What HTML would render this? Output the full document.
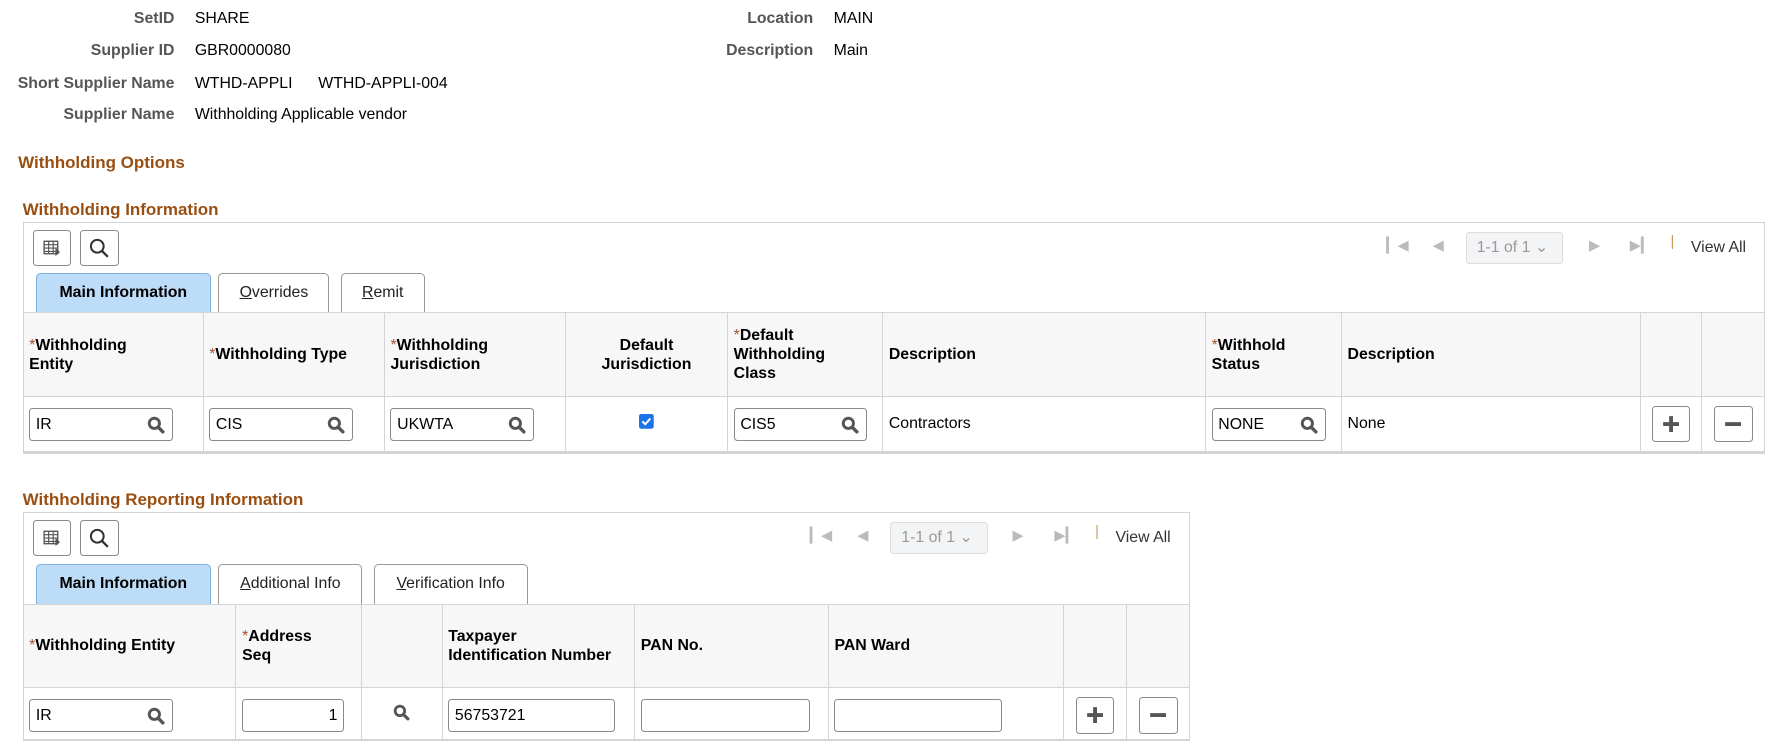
<!DOCTYPE html>
<html><head><meta charset="utf-8"><style>
body{margin:0;background:#fff;font-family:"Liberation Sans",Arial,sans-serif;font-size:14px;color:#000;}
#w{zoom:1.13265;position:relative;width:1568px;height:663px;overflow:hidden}
.a{position:absolute}
.lbl{position:absolute;font-weight:bold;color:#555;text-align:right;width:300px;}
.val{position:absolute}
.h{position:absolute;font-weight:bold;color:#9a4f12;font-size:15px}
.box{position:absolute;border:1px solid #d2d5d8;border-bottom:2px solid #d2d5d8;box-sizing:border-box;background:#fff;overflow:hidden}
.tb{position:absolute;width:34px;height:32px;border:1px solid #8a8a8a;border-radius:3px;box-sizing:border-box;background:#fff}
.tab{position:absolute;height:36px;border:1px solid #999;border-bottom:none;border-radius:4px 4px 0 0;box-sizing:border-box;text-align:center;line-height:34px;font-size:14px;color:#222;background:#fff}
.tab.on{background:#bddcf7;border-color:#7fb0e0;font-weight:bold;color:#000}
table{position:absolute;border-collapse:collapse;table-layout:fixed}
td{border:1px solid #d2d5d8;padding:0 5px;vertical-align:middle}
tr.hd td{background:#f7f7f7;font-weight:bold;height:73px;line-height:17px}
tr.rw td{height:48px}
i{font-style:normal;font-weight:normal;color:#a0522d}
.inp{position:relative;height:29px;border:1px solid #8a8a8a;border-radius:3px;box-sizing:border-box;line-height:29px;padding-left:5px;background:#fff}
.inp svg{position:absolute;right:6px;top:6px}
.pb{width:34px;height:32px;border:1px solid #8a8a8a;border-radius:3px;box-sizing:border-box;margin:0 auto;position:relative}
.pg{position:absolute;color:#bbb;font-size:13px}
.sel{position:absolute;width:86px;height:28px;border:1px solid #ddd;border-radius:3px;background:#f3f4f6;box-sizing:border-box;color:#999;line-height:26px;padding-left:9px}
.va{position:absolute;color:#333}
u{text-decoration:underline}
</style></head><body><div id="w">
<div class="lbl" style="left:-146px;top:9px">SetID</div><div class="val" style="left:172px;top:9px">SHARE</div>
<div class="lbl" style="left:-146px;top:37px">Supplier ID</div><div class="val" style="left:172px;top:37px">GBR0000080</div>
<div class="lbl" style="left:-146px;top:66px">Short Supplier Name</div><div class="val" style="left:172px;top:66px">WTHD-APPLI</div><div class="val" style="left:281px;top:66px">WTHD-APPLI-004</div>
<div class="lbl" style="left:-146px;top:94px">Supplier Name</div><div class="val" style="left:172px;top:94px">Withholding Applicable vendor</div>
<div class="lbl" style="left:418px;top:9px">Location</div><div class="val" style="left:736px;top:9px">MAIN</div>
<div class="lbl" style="left:418px;top:37px">Description</div><div class="val" style="left:736px;top:37px">Main</div>
<div class="h" style="left:16px;top:135px">Withholding Options</div>
<div class="h" style="left:20px;top:177px">Withholding Information</div>

<svg width="0" height="0" style="position:absolute"><defs>
<symbol id="s" viewBox="0 0 16 16"><circle cx="6.5" cy="6.5" r="4.5" fill="none" stroke="#555" stroke-width="2.6"/><path d="M10 10l4 4" stroke="#555" stroke-width="3" stroke-linecap="round"/></symbol>
<symbol id="s2" viewBox="0 0 16 16"><circle cx="6.5" cy="6.5" r="5" fill="none" stroke="#333" stroke-width="1.6"/><path d="M10.3 10.3l4.5 4.5" stroke="#333" stroke-width="1.8"/></symbol>
<symbol id="gr" viewBox="0 0 16 16"><rect x="1" y="2" width="12" height="11" fill="none" stroke="#555" stroke-width="1.2"/><path d="M1 5h12M1 8h12M1 11h12M5 2v11M9 2v11" stroke="#555" stroke-width="1"/><path d="M11 8l4 3.5-4 3.5z" fill="#555"/></symbol>
</defs></svg>

<div class="box" style="left:20px;top:196px;width:1538px;height:205px">
 <div class="tb" style="left:8px;top:6px"><svg width="16" height="16" style="margin:7px 0 0 8px"><use href="#gr"/></svg></div>
 <div class="tb" style="left:50px;top:6px"><svg width="18" height="18" style="margin:6px 0 0 7px"><use href="#s2"/></svg></div>
 <div class="pg" style="left:1203px;top:12px">&#9614;&#9664;</div>
 <div class="pg" style="left:1244px;top:12px">&#9664;</div>
 <div class="sel" style="left:1273px;top:8px">1-1 of 1 &#8964;</div>
 <div class="pg" style="left:1382px;top:12px">&#9654;</div>
 <div class="pg" style="left:1418px;top:12px">&#9654;&#9614;</div>
 <div class="pg" style="left:1454px;top:10px;color:#c89a5e">|</div>
 <div class="va" style="left:1472px;top:14px">View All</div>
 <div class="tab on" style="left:11px;top:44px;width:154px">Main Information</div>
 <div class="tab" style="left:172px;top:44px;width:98px"><u>O</u>verrides</div>
 <div class="tab" style="left:280px;top:44px;width:74px"><u>R</u>emit</div>
 <table style="left:-1px;top:79px;width:1538px">
  <colgroup><col style="width:159px"><col style="width:160px"><col style="width:160px"><col style="width:143px"><col style="width:137px"><col style="width:285px"><col style="width:120px"><col style="width:264px"><col style="width:54px"><col style="width:56px"></colgroup>
  <tr class="hd"><td><i>*</i>Withholding<br>Entity</td><td><i>*</i>Withholding Type</td><td><i>*</i>Withholding<br>Jurisdiction</td><td style="text-align:center">Default<br>Jurisdiction</td><td><i>*</i>Default<br>Withholding<br>Class</td><td>Description</td><td><i>*</i>Withhold<br>Status</td><td>Description</td><td></td><td></td></tr>
  <tr class="rw"><td><div class="inp" style="width:127px">IR<svg width="16" height="16"><use href="#s"/></svg></div></td>
  <td><div class="inp" style="width:127px">CIS<svg width="16" height="16"><use href="#s"/></svg></div></td>
  <td><div class="inp" style="width:127px">UKWTA<svg width="16" height="16"><use href="#s"/></svg></div></td>
  <td style="text-align:center"><svg width="13" height="13"><rect width="13" height="13" rx="2" fill="#1a73e8"/><path d="M3 6.5l2.5 2.5 4.5-5" stroke="#fff" stroke-width="1.8" fill="none"/></svg></td>
  <td><div class="inp" style="width:118px">CIS5<svg width="16" height="16"><use href="#s"/></svg></div></td>
  <td>Contractors</td>
  <td><div class="inp" style="width:101px">NONE<svg width="16" height="16"><use href="#s"/></svg></div></td>
  <td>None</td>
  <td><div class="pb"><svg width="16" height="16" style="position:absolute;left:8px;top:7px"><path d="M8 1v14M1 8h14" stroke="#555" stroke-width="3.4"/></svg></div></td>
  <td><div class="pb"><svg width="16" height="16" style="position:absolute;left:8px;top:7px"><path d="M1 8h14" stroke="#555" stroke-width="3.4"/></svg></div></td></tr>
 </table>
</div>

<div class="h" style="left:20px;top:433px">Withholding Reporting Information</div>
<div class="box" style="left:20px;top:452px;width:1031px;height:202px">
 <div class="tb" style="left:8px;top:6px"><svg width="16" height="16" style="margin:7px 0 0 8px"><use href="#gr"/></svg></div>
 <div class="tb" style="left:50px;top:6px"><svg width="18" height="18" style="margin:6px 0 0 7px"><use href="#s2"/></svg></div>
 <div class="pg" style="left:694px;top:12px">&#9614;&#9664;</div>
 <div class="pg" style="left:736px;top:12px">&#9664;</div>
 <div class="sel" style="left:765px;top:8px">1-1 of 1 &#8964;</div>
 <div class="pg" style="left:873px;top:12px">&#9654;</div>
 <div class="pg" style="left:910px;top:12px">&#9654;&#9614;</div>
 <div class="pg" style="left:946px;top:10px;color:#c89a5e">|</div>
 <div class="va" style="left:964px;top:14px">View All</div>
 <div class="tab on" style="left:11px;top:45px;width:154px">Main Information</div>
 <div class="tab" style="left:172px;top:45px;width:127px"><u>A</u>dditional Info</div>
 <div class="tab" style="left:309px;top:45px;width:136px"><u>V</u>erification Info</div>
 <table style="left:-1px;top:80px;width:1031px">
  <colgroup><col style="width:188px"><col style="width:111px"><col style="width:71px"><col style="width:170px"><col style="width:171px"><col style="width:208px"><col style="width:55px"><col style="width:57px"></colgroup>
  <tr class="hd"><td><i>*</i>Withholding Entity</td><td><i>*</i>Address<br>Seq</td><td></td><td>Taxpayer<br>Identification Number</td><td>PAN No.</td><td>PAN Ward</td><td></td><td></td></tr>
  <tr class="rw"><td style="height:44px"><div class="inp" style="width:127px">IR<svg width="16" height="16"><use href="#s"/></svg></div></td>
  <td><div class="inp" style="width:90px;text-align:right;padding-right:5px">1</div></td>
  <td style="text-align:center"><svg width="15" height="15"><use href="#s"/></svg></td>
  <td><div class="inp" style="width:147px">56753721</div></td>
  <td><div class="inp" style="width:149px"></div></td>
  <td><div class="inp" style="width:148px"></div></td>
  <td><div class="pb"><svg width="16" height="16" style="position:absolute;left:8px;top:7px"><path d="M8 1v14M1 8h14" stroke="#555" stroke-width="3.4"/></svg></div></td>
  <td><div class="pb"><svg width="16" height="16" style="position:absolute;left:8px;top:7px"><path d="M1 8h14" stroke="#555" stroke-width="3.4"/></svg></div></td></tr>
 </table>
</div>
</div></body></html>
